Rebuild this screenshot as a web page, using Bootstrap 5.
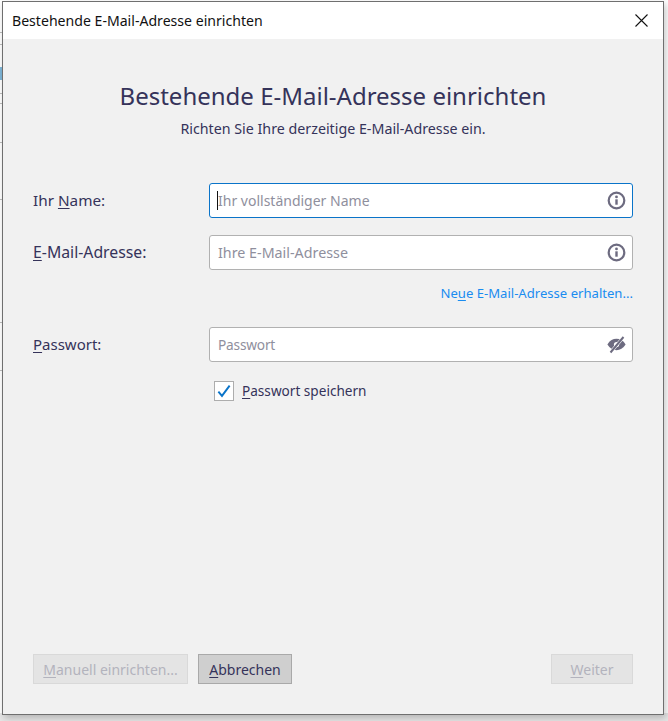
<!DOCTYPE html>
<html lang="de">
<head>
<meta charset="utf-8">
<title>Bestehende E-Mail-Adresse einrichten</title>
<link href="https://cdn.jsdelivr.net/npm/bootstrap@5.3.0/dist/css/bootstrap.min.css" rel="stylesheet">
<style>
html,body{height:100%;overflow:hidden}
body{font-family:"Noto Sans","Open Sans",sans-serif;color:#35335a;
 background-color:#fff;
 background-image:
  linear-gradient(#bdbdbd,#bdbdbd),linear-gradient(#bdbdbd,#bdbdbd),linear-gradient(#7fb6d8,#7fb6d8),
  linear-gradient(#bdbdbd,#bdbdbd),linear-gradient(#bdbdbd,#bdbdbd),linear-gradient(#bdbdbd,#bdbdbd),
  linear-gradient(#bdbdbd,#bdbdbd),linear-gradient(#bdbdbd,#bdbdbd),linear-gradient(#bdbdbd,#bdbdbd),
  linear-gradient(#e6e6e6,#e6e6e6);
 background-size:2px 1px,2px 1px,2px 13px,2px 1px,2px 1px,2px 1px,2px 1px,2px 1px,2px 1px,100% 8px;
 background-position:0 32px,0 44px,0 67px,0 93px,0 103px,0 142px,0 199px,0 322px,0 370px,0 713px;
 background-repeat:no-repeat}
.dlg{width:662px;height:714px;margin:1px 0 0 2px;background:#f1f1f1;border:1px solid #6f6f6f;box-shadow:2px 3px 7px rgba(0,0,0,.22)}
.dlg-title{height:37px;background:#fff;color:#111;font-size:14.1px;padding-left:9px}
.dlg-close{width:46px;height:37px;padding:0;background:transparent;border:0;margin-right:-1px}
.dlg-body{padding:0 30px 30px 30px}
.dlg-h{font-size:24px;font-weight:400;line-height:34px;margin:40px 0 0;color:#35335a}
.dlg-sub{font-size:14.25px;line-height:20px;margin:6px 0 0}
.f-row{height:35px;margin-top:17px}
.f-row.first{margin-top:44px}
.f-row.pw{margin-top:23px}
.f-label{width:176px;font-size:15.3px;margin:0;flex:none}
.f-label.ml{font-size:15.8px}
.f-label.pwl{font-size:15px}
.f-wrap{flex:1 1 auto}
.f-input.form-control{height:35px;border-radius:3px;border:1px solid #b1b1b1;font-size:14px;padding:0 34px 0 8px;color:#35335a;box-shadow:none;background:#fff}
.f-input.form-control.mli{font-size:14.3px}
.f-input.form-control.pwi{font-size:13.7px;letter-spacing:-.2px}
.f-input.form-control::placeholder{color:#8f8f9d;opacity:1}
.f-input.form-control.on{border-color:#0a74c9;caret-color:#111}
.f-caret{left:8px;top:8px;width:1px;height:19px;background:#111}
.f-icon{right:7px;top:8px;width:19px;height:19px}
.f-link-row{height:22px;margin-top:12px;font-size:13.1px;line-height:22px}
.f-link{color:#1a8cf0;text-decoration:none}
.f-check{margin:19px 0 0 181px;height:20px;padding:0;min-height:0}
.f-check .form-check-input{width:20px;height:20px;margin:0;float:none;border:1px solid #adadad;border-radius:0;background-color:#fff;background-size:18px;box-shadow:none;
 background-image:url("data:image/svg+xml,%3Csvg xmlns='http://www.w3.org/2000/svg' viewBox='0 0 16 16'%3E%3Cpath d='M3 8.500l3.200 3.800L13 3.200' fill='none' stroke='%230a74c9' stroke-width='1.700'/%3E%3C/svg%3E")}
.f-check .form-check-label{margin-left:8px;font-size:13.6px;line-height:20px}
.dlg-foot{margin-top:auto}
.b-act.btn{height:30px;border-radius:0;padding:1px 0 0;font-size:14px;line-height:28px;color:#35335a;background:#cfcfcf;border:1px solid #a9a9a9}
.b-act.btn:disabled{opacity:1;color:#b3b3bd;background:#e4e4e4;border-color:#d9d9d9}
.w-man{width:155px}.w-abb{width:94px}.w-wei{width:82px}
.gap-b{gap:10px}
u{text-underline-offset:2px;text-decoration-thickness:1px}
</style>
</head>
<body>
<div class="dlg d-flex flex-column">
  <div class="dlg-title d-flex align-items-center justify-content-between flex-none">
    <span>Bestehende E-Mail-Adresse einrichten</span>
    <button type="button" class="dlg-close d-flex align-items-center justify-content-center" aria-label="Schließen">
      <svg width="13" height="13" viewBox="0 0 13 13"><path d="M.5.5l12 12M12.500.5l-12 12" stroke="#111" stroke-width="1.100" fill="none"/></svg>
    </button>
  </div>
  <div class="dlg-body d-flex flex-column flex-grow-1">
    <h1 class="dlg-h text-center">Bestehende E-Mail-Adresse einrichten</h1>
    <p class="dlg-sub text-center">Richten Sie Ihre derzeitige E-Mail-Adresse ein.</p>

    <div class="f-row first d-flex align-items-center">
      <label class="f-label" for="n"><span>Ihr <u>N</u>ame:</span></label>
      <div class="f-wrap position-relative">
        <input id="n" class="form-control f-input on" placeholder="Ihr vollständiger Name">
        <span class="f-caret position-absolute"></span>
        <svg class="f-icon position-absolute" viewBox="0 0 19 19"><circle cx="9.500" cy="9.500" r="7.800" fill="none" stroke="#6d6b80" stroke-width="2.200"/><circle cx="9.500" cy="5.900" r="1.400" fill="#6d6b80"/><path d="M9.500 8.300v5.400" stroke="#6d6b80" stroke-width="2.400"/></svg>
      </div>
    </div>

    <div class="f-row d-flex align-items-center">
      <label class="f-label ml" for="e"><u>E</u>-Mail-Adresse:</label>
      <div class="f-wrap position-relative">
        <input id="e" class="form-control f-input mli" placeholder="Ihre E-Mail-Adresse">
        <svg class="f-icon position-absolute" viewBox="0 0 19 19"><circle cx="9.500" cy="9.500" r="7.800" fill="none" stroke="#6d6b80" stroke-width="2.200"/><circle cx="9.500" cy="5.900" r="1.400" fill="#6d6b80"/><path d="M9.500 8.300v5.400" stroke="#6d6b80" stroke-width="2.400"/></svg>
      </div>
    </div>

    <div class="f-link-row text-end"><a class="f-link" href="#">Ne<u>u</u>e E-Mail-Adresse erhalten...</a></div>

    <div class="f-row pw d-flex align-items-center">
      <label class="f-label pwl" for="p"><u>P</u>asswort:</label>
      <div class="f-wrap position-relative">
        <input id="p" class="form-control f-input pwi" placeholder="Passwort">
        <svg class="f-icon position-absolute" viewBox="0 0 19 19"><path d="M.4 9.500C2.800 5.500 6 3.800 9.500 3.800S16.200 5.500 18.600 9.500C16.200 13.500 13 15.200 9.500 15.200S2.800 13.500 .4 9.500z" fill="#6d6b80"/><circle cx="9.500" cy="9.500" r="2.600" fill="#fff"/><path d="M3 18L17 1.500" stroke="#fff" stroke-width="3.200"/><path d="M3.500 17.500L16.500 2" stroke="#6d6b80" stroke-width="2"/></svg>
      </div>
    </div>

    <div class="form-check f-check d-flex align-items-center">
      <input class="form-check-input" type="checkbox" id="s" checked>
      <label class="form-check-label" for="s"><u>P</u>asswort speichern</label>
    </div>

    <div class="dlg-foot d-flex gap-b">
      <button class="btn b-act w-man" disabled><u>M</u>anuell einrichten...</button>
      <button class="btn b-act w-abb"><u>A</u>bbrechen</button>
      <button class="btn b-act w-wei ms-auto" disabled><u>W</u>eiter</button>
    </div>
  </div>
</div>
</body>
</html>
